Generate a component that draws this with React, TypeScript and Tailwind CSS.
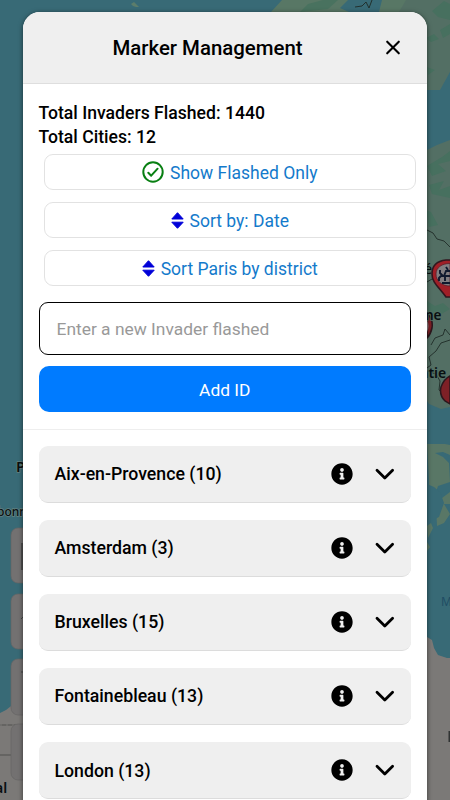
import { FaInfoCircle } from "react-icons/fa";
import type { ReactNode } from "react";

const cities = [
  { name: "Aix-en-Provence", count: 10 },
  { name: "Amsterdam", count: 3 },
  { name: "Bruxelles", count: 15 },
  { name: "Fontainebleau", count: 13 },
  { name: "London", count: 13 },
];

function MapBackground() {
  return (
    <svg className="absolute inset-0 h-full w-full" viewBox="0 0 450 800" fontFamily="'Noto Sans', sans-serif">
      <rect width="450" height="800" fill="#386a76" />
      <path d="M131 4l3-2 3 3 2 2h-3l-3-1z" fill="#5c7d6b" />
      <path d="M271 12L282 0H348L340 8 349 12zM379 12L382 0H410V12z" fill="#587765" />
      <path d="M300 12l8-8 15-4h15l-10 9z" fill="#49725f" />
      <path d="M355 7l7-1 4-4 3 6 3-8" fill="none" stroke="#22302d" />
      <path d="M399 12L406 0H450V72L440 90H420V15z" fill="#536f64" />
      <path d="M432 11l12-10 6 3v16l-12-3zM426 38l8-4 5 5-8 3zM440 30l10-6v10l-7 4zM427 67l8 3-7 5z" fill="#47705f" />
      <path d="M425 151l12-6 13-5v267l-9 2-12-5-6-10z" fill="#536f64" />
      <path d="M427 166l15-9 8-6v10l-12 3 8 7-14 5zM429 185l15-4-5 9 11-4v12l-18-4zM426 210l5 2 7 13-9 2zM427 301l8 5 8-3 7 6-12 7-10-4z" fill="#47705f" />
      <path d="M427 230l6 3 4 6 7 2 6 6M427 282l5-3 9 5M431 345l4-7 8-3 2-6 5 6M450 340l-9 3-5 8-7 6 2 8-4 3M427 371l9 3 4 7-1 9 8 6" fill="none" stroke="#25332e" strokeWidth="1" />
      <path d="M427 444h18l5 1v10l-7-3-8 1 8 4 6 6 1 19-12 4-4 12-5 4v-23zM444 504h6v-12l-8 6-6 6 1 22 7-3 6-9zM427 526l4-3 2 5-5 10zM427 542l3 5-3 4z" fill="#597766" />
      <path d="M427 484l7 3 6 5 4 11-5 14-10 5-3-2z" fill="#386a76" />
      <path d="M427 637l5 3 2 8 4 7 9 3h3v142h-25zM0 713l6-3 14-11h9v101H0z" fill="#7b7977" />
      <path d="M0 725h25M0 755h25" fill="none" stroke="#50504f" />
      <path d="M0 725h25" fill="none" stroke="#7b7977" strokeDasharray="2 4" />
      <g fill="#737171" stroke="#656464" strokeWidth=".7">
        <rect x="11" y="528" width="34" height="55" rx="7" />
        <rect x="11" y="594" width="34" height="55" rx="7" />
        <rect x="11" y="659" width="34" height="56" rx="7" />
        <rect x="11" y="724" width="34" height="56" rx="7" />
      </g>
      <path d="M22 543v27" stroke="#424545" strokeWidth="1.5" />
      <path d="M21 619q2-3 4-2M21 672h4" stroke="#424545" fill="none" />
      <path d="M427 313c4 4 6 9 5 15-1 5-3 8-5 10zM450 376q-6 3-9 11-2 8 4 14l5 3z" fill="#7e2026" stroke="#2c171d" strokeWidth="1.5" />
      <path d="M427 320q3 6 0 12z" fill="#898184" />
      <g fill="#080f11" stroke="#65817f" strokeWidth="1.5" paintOrder="stroke" fontWeight="600">
        <text x="16" y="472" fontSize="15">P</text>
        <text x="-3" y="516" fontSize="12" fontWeight="500">bonn</text>
        <text x="-5" y="793" fontSize="14" stroke="#7b7977">al</text>
        <text x="424" y="274" fontSize="14.5" fontWeight="400" stroke="#536f64">é</text>
        <text x="425" y="320" fontSize="13.5" stroke="#536f64">ne</text>
        <text x="419.5" y="378" fontSize="14" stroke="#536f64">ntie</text>
      </g>
      <text x="441" y="606" fontSize="12" fill="#204d64">M</text>
      <path d="M449.5 731v11" stroke="#303333" strokeWidth="2" />
      <path d="M453 260h-7c-9 1-14 6-14 14 0 9 7 13 14 23h7z" fill="#a01f27" stroke="#32171f" strokeWidth="1.6" />
      <path d="M450 263.500c-8 0-14 4-14 10.500 0 7 6 12 14 12z" fill="#827e81" stroke="#531b26" strokeWidth=".7" />
      <path d="M440 270v3l2 2-3 3v3m2-5h3l2-5h4m-5 4v6m-3 2h8m-4-7h4m-2-6-2-3m-4 9h8" stroke="#10192e" strokeWidth="1.9" fill="none" />
    </svg>
  );
}

function CheckCircle() {
  return (
    <svg width="22" height="22" viewBox="0 0 22 22" fill="none" stroke="#087f12" strokeWidth="2" strokeLinecap="round" strokeLinejoin="round">
      <circle cx="11" cy="11" r="9.7" />
      <path d="M6.300 11.700l2.900 3 6.400-7" />
    </svg>
  );
}

function SortIcon() {
  return (
    <svg width="13" height="17" viewBox="0 0 13 17" fill="#0000d8" stroke="#0000d8" strokeWidth="1" strokeLinejoin="round">
      <path d="M6.5.7L12.2 7H.8zM.8 10.2h11.4L6.500 16.300z" />
    </svg>
  );
}

function CloseIcon() {
  return (
    <svg className="shrink-0" width="16" height="16" viewBox="0 0 16 16" fill="none" stroke="currentColor" strokeWidth="2.1" strokeLinecap="round">
      <path d="M2.200 1.700l11.600 11.600M13.800 1.700L2.200 13.300" />
    </svg>
  );
}

function ChevronIcon() {
  return (
    <svg className="ml-[22px]" width="20" height="14" viewBox="0 0 20 14" fill="none" stroke="currentColor" strokeWidth="2.8" strokeLinecap="round" strokeLinejoin="round">
      <path d="M2 3.200L9.800 11l7.800-7.800" />
    </svg>
  );
}

function FilterButton({ icon, children }: { icon: ReactNode; children: ReactNode }) {
  return (
    <button className="flex h-9 w-full items-center justify-center gap-[6px] rounded-[9px] border border-[#e2e2e2] bg-white text-[17.5px] text-[#147acb]">
      {icon}
      <span className="pt-0.5">{children}</span>
    </button>
  );
}

export default function App() {
  return (
    <div className="relative h-[800px] w-[450px] overflow-hidden bg-[#386a76] font-['Roboto',sans-serif]">
      <MapBackground />
      <main className="relative mt-3 ml-[22.5px] h-[810px] w-[404.5px] overflow-hidden rounded-[17px] bg-white shadow-[0_1px_5px_rgba(0,0,0,0.55)]">
        <header className="flex h-[72px] items-center border-b border-[#dedede] bg-[#efefef] pr-[26.5px] pl-[8px]">
          <h1 className="flex-1 pt-px text-center text-[20.4px] font-medium text-black">Marker Management</h1>
          <button aria-label="Close" className="flex w-4 justify-center text-black"><CloseIcon /></button>
        </header>
        <section className="h-[346px] border-b border-[#eeeeee] px-4 pt-[17px]">
          <div className="text-[17.6px] leading-6 font-medium text-black">
            <p>Total Invaders Flashed: 1440</p>
            <p>Total Cities: 12</p>
          </div>
          <div className="mt-[5px] ml-[5px] flex w-[372.5px] flex-col gap-3">
            <FilterButton icon={<CheckCircle />}>Show Flashed Only</FilterButton>
            <FilterButton icon={<SortIcon />}>Sort by: Date</FilterButton>
            <FilterButton icon={<SortIcon />}>Sort Paris by district</FilterButton>
          </div>
          <input className="mt-4 block h-[53px] w-full rounded-[9px] border border-black px-[17px] text-[17.4px] placeholder:text-[#999999]" placeholder="Enter a new Invader flashed" />
          <button className="mt-[11px] block h-[46px] w-full rounded-[10px] bg-[#007bff] pt-0.5 text-[17.4px] text-white">Add ID</button>
        </section>
        <section className="flex flex-col gap-[17px] px-4 pt-[15.5px]">
          {cities.map((city) => (
            <div key={city.name} className="flex h-[57.2px] shrink-0 items-center rounded-[9px] border-b border-[#dcdcdc] bg-[#efefef] px-4 text-black">
              <h2 className="flex-1 pt-px text-[17.7px] font-medium">{city.name} ({city.count})</h2>
              <FaInfoCircle size={22} />
              <ChevronIcon />
            </div>
          ))}
        </section>
      </main>
    </div>
  );
}
